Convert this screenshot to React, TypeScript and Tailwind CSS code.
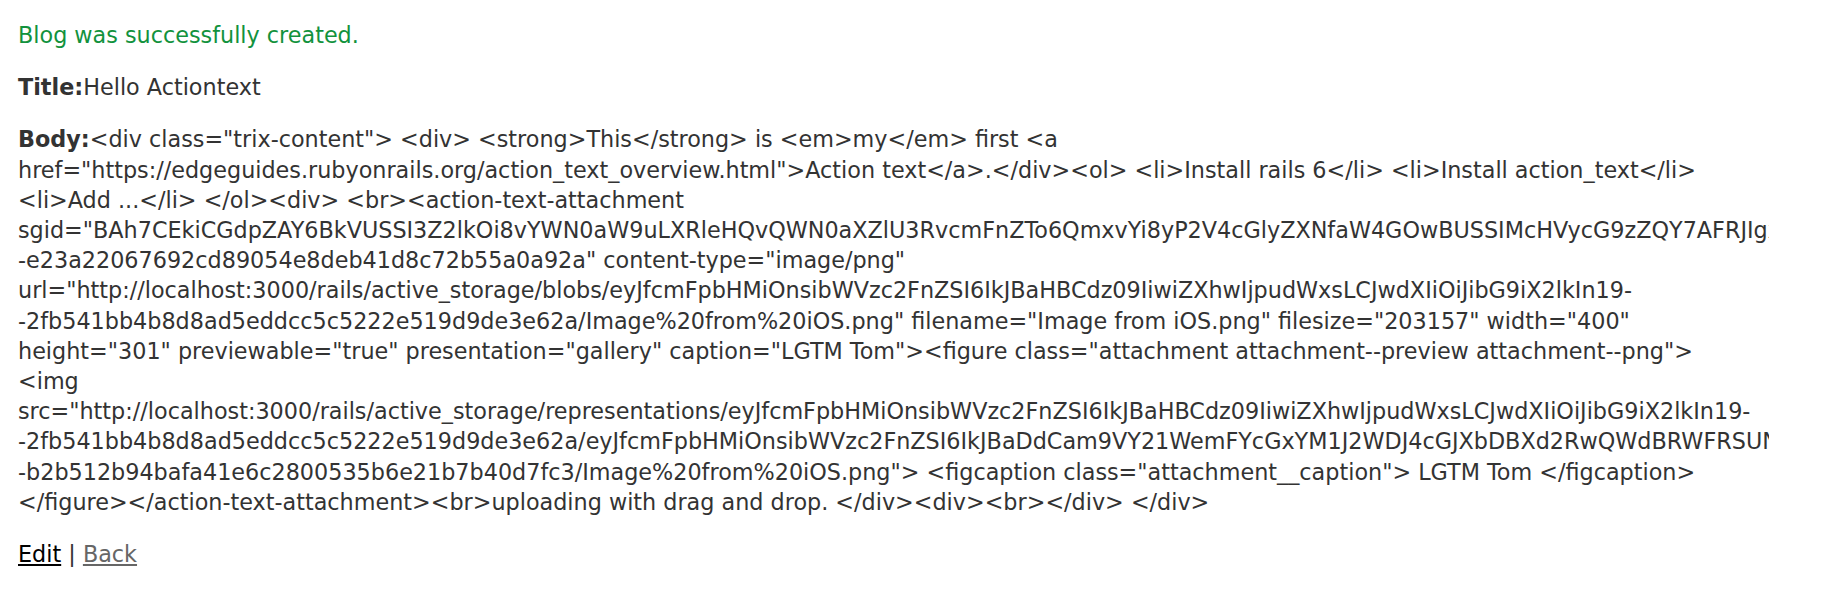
import React from "react";

const bodyLines: string[] = [
  '<div class="trix-content"> <div> <strong>This</strong> is <em>my</em> first <a',
  'href="https://edgeguides.rubyonrails.org/action_text_overview.html">Action text</a>.</div><ol> <li>Install rails 6</li> <li>Install action_text</li>',
  "<li>Add ...</li> </ol><div> <br><action-text-attachment",
  'sgid="BAh7CEkiCGdpZAY6BkVUSSI3Z2lkOi8vYWN0aW9uLXRleHQvQWN0aXZlU3RvcmFnZTo6QmxvYi8yP2V4cGlyZXNfaW4GOwBUSSIMcHVycG9zZQY7AFRJIgxhdHRhY2hhYmxlBjsAVEkiD2V4cGlyZXNfYXQGOwBUMA==-',
  '-e23a22067692cd89054e8deb41d8c72b55a0a92a" content-type="image/png"',
  'url="http://localhost:3000/rails/active_storage/blobs/eyJfcmFpbHMiOnsibWVzc2FnZSI6IkJBaHBCdz09IiwiZXhwIjpudWxsLCJwdXIiOiJibG9iX2lkIn19-',
  '-2fb541bb4b8d8ad5eddcc5c5222e519d9de3e62a/Image%20from%20iOS.png" filename="Image from iOS.png" filesize="203157" width="400"',
  'height="301" previewable="true" presentation="gallery" caption="LGTM Tom"><figure class="attachment attachment--preview attachment--png">',
  "<img",
  'src="http://localhost:3000/rails/active_storage/representations/eyJfcmFpbHMiOnsibWVzc2FnZSI6IkJBaHBCdz09IiwiZXhwIjpudWxsLCJwdXIiOiJibG9iX2lkIn19-',
  "-2fb541bb4b8d8ad5eddcc5c5222e519d9de3e62a/eyJfcmFpbHMiOnsibWVzc2FnZSI6IkJBaDdCam9VY21WemFYcGxYM1J2WDJ4cGJXbDBXd2RwQWdBRWFRSUNBUT09IiwiZXhwIjpudWxsLCJwdXIiOiJ2YXJpYXRpb24ifX0=-",
  '-b2b512b94bafa41e6c2800535b6e21b7b40d7fc3/Image%20from%20iOS.png"> <figcaption class="attachment__caption"> LGTM Tom </figcaption>',
  "</figure></action-text-attachment><br>uploading with drag and drop. </div><div><br></div> </div>",
];

export default function App() {
  return (
    <div className="min-h-screen bg-white">
      <div
        className="w-[1769px] overflow-hidden px-[18px] pt-[20px] text-[22.3px] leading-[30.2px] text-[#333]"
        style={{ fontFamily: '"DejaVu Sans", Verdana, sans-serif' }}
      >
        <p className="mb-[22px] text-[#12923d]">Blog was successfully created.</p>

        <p className="mb-[22px]">
          <strong>Title:</strong>Hello Actiontext
        </p>

        <div className="mb-[22px]">
          {bodyLines.map((line, i) => (
            <div key={i} className="whitespace-pre">
              {i === 0 && <strong>Body:</strong>}
              {line}
            </div>
          ))}
        </div>

        <div>
          <a href="#" className="text-black underline">
            Edit
          </a>{" "}
          |{" "}
          <a href="#" className="text-[#666] underline">
            Back
          </a>
        </div>
      </div>
    </div>
  );
}
